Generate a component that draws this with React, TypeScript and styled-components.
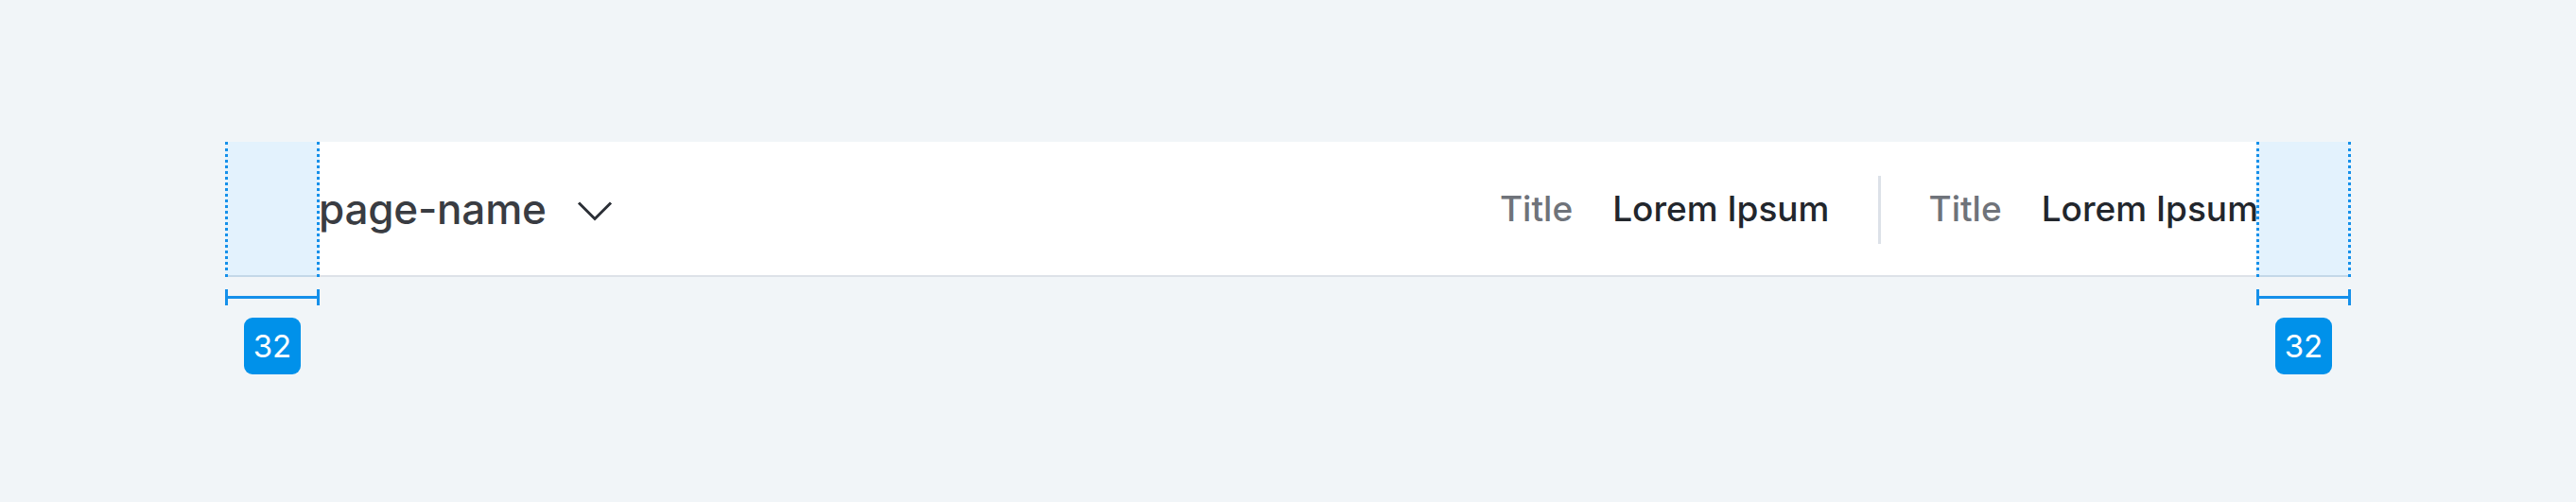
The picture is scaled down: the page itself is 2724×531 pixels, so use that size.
import React from "react";
import styled, { createGlobalStyle } from "styled-components";

const Global = createGlobalStyle`
  html, body { margin: 0; padding: 0; background: #f1f5f8; }
  body { font-family: Inter, "Noto Sans", "Liberation Sans", sans-serif; }
  * { box-sizing: border-box; }
`;

const Canvas = styled.div`
  width: 2724px;
  height: 531px;
  padding-top: 150px;
  display: flex;
  justify-content: center;
`;

const Frame = styled.div`
  width: 2248px;
  display: flex;
  flex-direction: column;
`;

const Header = styled.header`
  position: relative;
  height: 143px;
  background: #ffffff;
  border-bottom: 2px solid #dde2e8;
  padding: 0 98px 0 99px;
  display: flex;
  align-items: center;
  justify-content: space-between;
`;

const PadOverlay = styled.div<{ $side: "left" | "right" }>`
  position: absolute;
  top: 0;
  bottom: -2px;
  ${(p) => (p.$side === "left" ? "left: 0;" : "right: 0;")}
  width: 100px;
  background: rgba(0, 140, 234, 0.11);
  border-left: 3px dotted #1590ea;
  border-right: 3px dotted #1590ea;
`;

const PageSelect = styled.div`
  display: flex;
  align-items: center;
  gap: 32px;
  color: #393c42;
  font-size: 44px;
  font-weight: 500;
  letter-spacing: -0.2px;
`;

const Chevron = styled.svg`
  width: 38px;
  height: 22px;
  margin-top: 4px;
`;

const Meta = styled.div`
  display: flex;
  align-items: center;
`;

const MetaItem = styled.div`
  display: flex;
  align-items: center;
  gap: 42px;
  font-size: 37px;
  font-weight: 500;
`;

const MetaLabel = styled.span`
  color: #6f737a;
`;

const MetaValue = styled.span`
  color: #22262c;
`;

const Divider = styled.div`
  width: 3px;
  height: 72px;
  background: #dce1e8;
  margin: 2px 50px 0 52px;
`;

const Annotations = styled.div`
  display: flex;
  justify-content: space-between;
  margin-top: 13px;
`;

const Measure = styled.div`
  width: 100px;
  display: flex;
  flex-direction: column;
  align-items: center;
  gap: 13px;
`;

const Ruler = styled.div`
  position: relative;
  width: 100%;
  height: 17px;
  border-left: 3px solid #1590ea;
  border-right: 3px solid #1590ea;
  &::after {
    content: "";
    position: absolute;
    left: 0;
    right: 0;
    top: 7px;
    height: 3px;
    background: #1590ea;
  }
`;

const Badge = styled.div`
  width: 60px;
  height: 60px;
  border-radius: 9px;
  background: #0091ea;
  color: #ffffff;
  font-size: 33px;
  font-weight: 400;
  display: flex;
  align-items: center;
  justify-content: center;
`;

const meta = [
  { label: "Title", value: "Lorem Ipsum" },
  { label: "Title", value: "Lorem Ipsum" },
];

export default function App() {
  return (
    <>
      <Global />
      <Canvas>
        <Frame>
          <Header>
            <PageSelect>
              <span>page-name</span>
              <Chevron viewBox="0 0 38 22" fill="none">
                <path d="M2 2.5 L19 19.5 L36 2.5" stroke="#2b2f36" strokeWidth="3" />
              </Chevron>
            </PageSelect>
            <Meta>
              {meta.map((m, i) => (
                <React.Fragment key={i}>
                  {i > 0 && <Divider />}
                  <MetaItem>
                    <MetaLabel>{m.label}</MetaLabel>
                    <MetaValue>{m.value}</MetaValue>
                  </MetaItem>
                </React.Fragment>
              ))}
            </Meta>
            <PadOverlay $side="left" />
            <PadOverlay $side="right" />
          </Header>
          <Annotations>
            <Measure>
              <Ruler />
              <Badge>32</Badge>
            </Measure>
            <Measure>
              <Ruler />
              <Badge>32</Badge>
            </Measure>
          </Annotations>
        </Frame>
      </Canvas>
    </>
  );
}
